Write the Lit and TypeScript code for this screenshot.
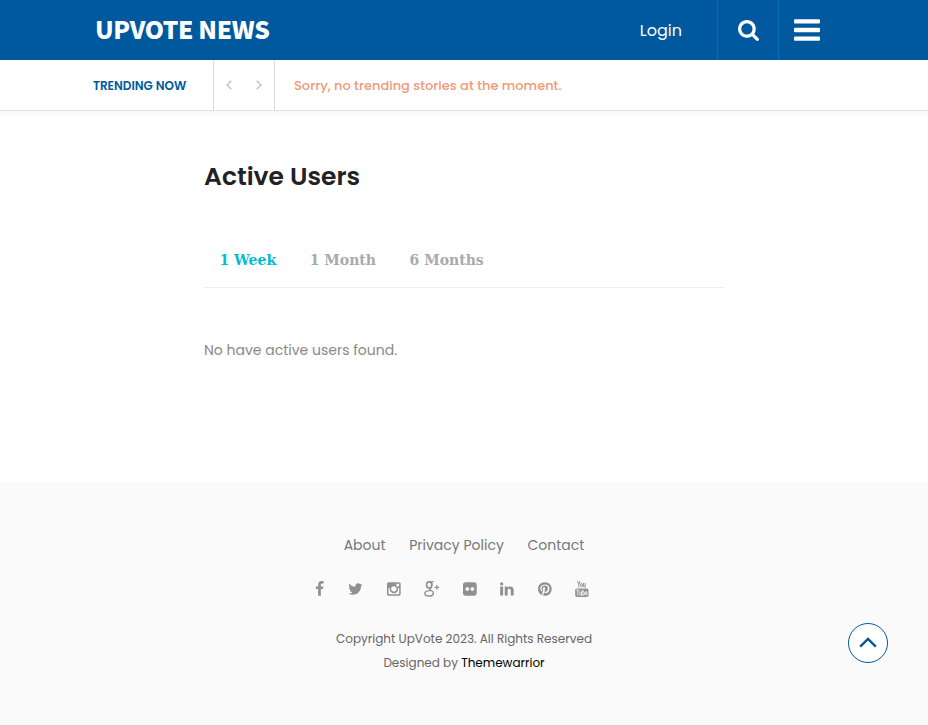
import { LitElement, html, svg, css } from "lit";
import { customElement, state } from "lit/decorators.js";

const solid = (d: string) => svg`<path d=${d} />`;

// x and w give each glyph's left edge and advance on the 1792-unit icon grid.
const socials = [
  { name: "Facebook", x: 384, w: 1024, art: solid("M1343 12v264h-157q-86 0-116 36t-30 108v189h293l-39 296h-254v759h-306v-759h-255v-296h255v-218q0-186 104-288.500t277-102.500q147 0 228 12z") },
  { name: "Twitter", x: 64, w: 1664, art: solid("M1684 408q-67 98-162 167 1 14 1 42 0 130-38 259.500t-115.500 248.500-184.500 210.500-258 146-323 54.500q-271 0-496-145 35 4 78 4 225 0 401-138-105-2-188-64.500t-114-159.500q33 5 61 5 43 0 85-11-112-23-185.500-111.500t-73.500-205.500v-4q68 38 146 41-66-44-105-115t-39-154q0-88 44-163 121 149 294.500 238.500t371.500 99.500q-8-38-8-74 0-134 94.500-228.500t228.500-94.500q140 0 236 102 109-21 205-78-37 115-142 178 93-10 186-50z") },
  { name: "Instagram", x: 128, w: 1536, art: solid("M1490 1426v-648h-135q20 63 20 131 0 126-64 232.500t-174 168.500-240 62q-197 0-337-135.500t-140-327.500q0-68 20-131h-141v648q0 26 17.500 43.500t43.500 17.500h1069q25 0 43-17.500t18-43.500zm-284-533q0-124-90.500-211.500t-218.500-87.500q-127 0-217.500 87.500t-90.500 211.500 90.500 211.500 217.500 87.500q128 0 218.500-87.500t90.500-211.500zm284-360v-165q0-28-20-48.500t-49-20.500h-174q-29 0-49 20.500t-20 48.500v165q0 29 20 49t49 20h174q29 0 49-20t20-49zm174-208v1142q0 81-58 139t-139 58h-1142q-81 0-139-58t-58-139v-1142q0-81 58-139t139-58h1142q81 0 139 58t58 139z") },
  {
    name: "Google Plus", x: 0, w: 1720,
    art: svg`<g fill="none" stroke="currentColor">
      <ellipse cx="580" cy="440" rx="290" ry="340" stroke-width="180" />
      <path d="M1130 75H600M840 110Q980 220 930 480" stroke-width="110" />
      <path d="M850 640C870 800 560 800 640 960C720 1070 1060 1120 1050 1380C1030 1600 800 1690 550 1690C280 1690 90 1590 90 1400C90 1210 320 1090 700 1080" stroke-width="160" />
      <path d="M1440 450V970M1180 710H1710" stroke-width="130" />
    </g>`,
  },
  { name: "Flickr", x: 128, w: 1536, art: solid("M1376 128q119 0 203.500 84.500t84.500 203.500v960q0 119-84.500 203.500t-203.500 84.500h-960q-119 0-203.500-84.500t-84.500-203.500v-960q0-119 84.500-203.500t203.500-84.500h960zm-550 768q0-88-62-150t-150-62-150 62-62 150 62 150 150 62 150-62 62-150zm564 0q0-88-62-150t-150-62-150 62-62 150 62 150 150 62 150-62 62-150z") },
  { name: "LinkedIn", x: 128, w: 1536, art: solid("M477 625v991h-330v-991h330zm21-306q1 73-50.500 122t-135.500 49h-2q-82 0-132-49t-50-122q0-74 51.500-122.500t134.500-48.500 133 48.500 51 122.500zm1166 729v568h-329v-530q0-105-40.500-164.500t-126.500-59.500q-63 0-105.500 34.500t-63.500 85.500q-11 30-11 81v553h-329q2-399 2-647t-1-296l-1-48h329v144h-2q20-32 41-56t56.500-52 87-43.500 114.500-15.500q171 0 275 113.500t104 332.500z") },
  { name: "Pinterest", x: 128, w: 1536, art: solid("M1664 896q0 209-103 385.500t-279.500 279.500-385.500 103q-111 0-218-32 59-93 78-164 9-34 54-211 20 39 73 67.500t114 28.500q121 0 216-68.500t147-188.500 52-270q0-114-59.500-214t-172.500-163-255-63q-105 0-196 29t-154.500 77-109 110.500-67 129.500-21.500 134q0 104 40 183t117 111q30 12 38-20 2-7 8-31t8-30q6-23-11-43-51-61-51-151 0-151 104.500-259.500t273.500-108.500q151 0 235.500 82t84.500 213q0 170-68.500 289t-175.500 119q-61 0-98-43.500t-23-104.500q8-35 26.500-93.500t30-103 11.500-75.500q0-50-27-83t-77-33q-62 0-105 57t-43 142q0 73 25 122l-99 418q-17 70-13 177-206-91-333-281t-127-423q0-209 103-385.500t279.500-279.500 385.500-103 385.500 103 279.500 279.500 103 385.500z") },
  {
    name: "YouTube", x: 128, w: 1536,
    art: svg`<g fill="none" stroke="currentColor" stroke-width="105">
        <path d="M415 10L555 390V720M695 10L555 390" />
        <rect x="775" y="265" width="165" height="405" rx="80" />
        <path d="M1085 210V620Q1090 680 1150 665Q1210 640 1265 570M1265 210V720" />
      </g>
      <rect x="150" y="850" width="1490" height="930" rx="190" />
      <g fill="none" stroke="#fafafa" stroke-width="95">
        <path d="M270 1010H610M440 1010V1640" />
        <path d="M680 1150V1520Q690 1600 745 1590Q800 1570 850 1510M850 1150V1640" />
        <path d="M1005 970V1640M1005 1240Q1180 1100 1180 1260V1500Q1170 1650 1005 1550" />
        <path d="M1490 1480Q1490 1590 1405 1590Q1325 1590 1325 1490V1290Q1325 1180 1405 1180Q1490 1180 1490 1290V1380H1325" />
      </g>`,
  },
];

@customElement("app-root")
export class AppRoot extends LitElement {
  @state() private range = "1 Week";

  static styles = css`
    :host { display: flex; flex-direction: column; min-height: 725px; background: #fff; font-family: Poppins, Inter, sans-serif; color: #777; }
    a { color: inherit; text-decoration: none; }
    button { font: inherit; color: inherit; background: none; border: 0; padding: 0; cursor: pointer; }
    .header { display: flex; height: 60px; background: #00589e; color: #fff; padding: 0 93px 0 95px; }
    .logo { font: 900 24.5px/58px "Noto Sans CJK JP", sans-serif; letter-spacing: -0.4px; margin-right: auto; white-space: nowrap; }
    .login { font-size: 16px; line-height: 61px; margin-right: 35px; }
    .tool { display: flex; align-items: center; justify-content: center; width: 61px; border-left: 1px solid #0071b9; }
    .tool.menu { width: 57px; }
    .search-icon { width: 21px; height: 21px; fill: #fff; margin-top: 1px; }
    .bars-icon { width: 26px; height: 22px; fill: #fff; }
    .ticker { display: flex; height: 50px; padding-left: 93px; line-height: 51px; border-bottom: 1px solid #e3e3e3; box-shadow: 0 2px 6px rgba(0, 0, 0, .05); }
    .ticker-title { width: 120px; font-size: 12px; font-weight: 600; color: #00589e; }
    .arrows { display: flex; align-items: center; justify-content: space-between; box-sizing: border-box; width: 62px; padding: 0 12px; border: solid #ddd; border-width: 0 1px; }
    .arrow { width: 6px; height: 10px; fill: none; stroke: #c4c4c4; stroke-width: 1.5; display: block; }
    .ticker-text { margin-left: 19px; font-size: 13px; font-weight: 500; color: #f0997a; }
    .content { box-sizing: border-box; width: 520px; margin: 0 auto; height: 371px; padding-top: 46px; }
    h1 { margin: 0; font-size: 25px; line-height: 40px; font-weight: 600; color: #222; }
    .tabs { display: flex; gap: 33.6px; margin-top: 35px; padding: 0 15.4px; height: 55px; border-bottom: 1px solid #e8f0f0; font: 700 14px/54px "DejaVu Serif", serif; color: #aaa; }
    .tab.active { color: #00bcd4; }
    .empty { margin: 50px 0 0; font-size: 14px; line-height: 24px; color: #888; }
    .footer { position: relative; box-sizing: border-box; height: 243px; padding-top: 51px; background: #fafafa; }
    .links { display: flex; justify-content: center; gap: 23.7px; font-size: 14px; line-height: 24px; }
    .social { display: flex; gap: 23.7px; margin: 24px 0 0 315.2px; color: #909090; }
    .social svg { display: block; height: 16px; fill: currentColor; overflow: visible; }
    .copy { margin: 30px 0 0; text-align: center; font-size: 12px; line-height: 24px; color: #666; }
    .copy a { color: #000; }
    .to-top { position: absolute; right: 40px; top: 141px; display: flex; align-items: center; justify-content: center; box-sizing: border-box; width: 40px; height: 40px; border: 1px solid #00589e; border-radius: 50%; background: #fff; }
    .to-top svg { width: 18px; height: 11px; fill: none; stroke: #00589e; stroke-width: 2.4; margin-bottom: 1px; }
  `;

  render() {
    return html`
      <header class="header">
        <a class="logo">UPVOTE NEWS</a>
        <a class="login">Login</a>
        <button class="tool" aria-label="Search">
          <svg class="search-icon" viewBox="0 0 1664 1664"><path d="M1152 704q0-185-131.5-316.5t-316.5-131.5-316.5 131.5-131.5 316.5 131.5 316.5 316.5 131.5 316.500-131.500 131.500-316.500zm512 832q0 52-38 90t-90 38q-54 0-90-38l-343-342q-179 124-399 124-143 0-273.500-55.500t-225-150-150-225-55.500-273.500 55.500-273.500 150-225 225-150 273.500-55.500 273.500 55.500 225 150 150 225 55.500 273.500q0 220-124 399l343 343q37 37 37 90z" /></svg>
        </button>
        <button class="tool menu" aria-label="Menu">
          <svg class="bars-icon" viewBox="0 0 26 22">
            <rect y="0.300" width="26" height="4.300" rx="1" /><rect y="8.850" width="26" height="4.300" rx="1" /><rect y="17.400" width="26" height="4.300" rx="1" />
          </svg>
        </button>
      </header>
      <section class="ticker">
        <span class="ticker-title">TRENDING NOW</span>
        <div class="arrows">
          <button aria-label="Previous"><svg class="arrow" viewBox="0 0 6 10"><path d="M5.300 0.700L1 5L5.300 9.300" /></svg></button>
          <button aria-label="Next"><svg class="arrow" viewBox="0 0 6 10"><path d="M0.700 0.700L5 5L0.700 9.300" /></svg></button>
        </div>
        <span class="ticker-text">Sorry, no trending stories at the moment.</span>
      </section>
      <main class="content">
        <h1>Active Users</h1>
        <nav class="tabs">
          ${["1 Week", "1 Month", "6 Months"].map((t) => html`<button class="tab ${t === this.range ? "active" : ""}" @click=${() => (this.range = t)}>${t}</button>`)}
        </nav>
        <p class="empty">No have active users found.</p>
      </main>
      <footer class="footer">
        <nav class="links"><a>About</a><a>Privacy Policy</a><a>Contact</a></nav>
        <nav class="social">
          ${socials.map((s) => html`<a aria-label=${s.name}><svg width=${(s.w * 16) / 1792} viewBox="${s.x} 0 ${s.w} 1792">${s.art}</svg></a>`)}
        </nav>
        <p class="copy">Copyright UpVote 2023. All Rights Reserved<br />Designed by <a>Themewarrior</a></p>
        <button class="to-top" aria-label="Back to top"><svg viewBox="0 0 18 11"><path d="M1.200 9.600L9 1.900L16.800 9.600" /></svg></button>
      </footer>
    `;
  }
}
